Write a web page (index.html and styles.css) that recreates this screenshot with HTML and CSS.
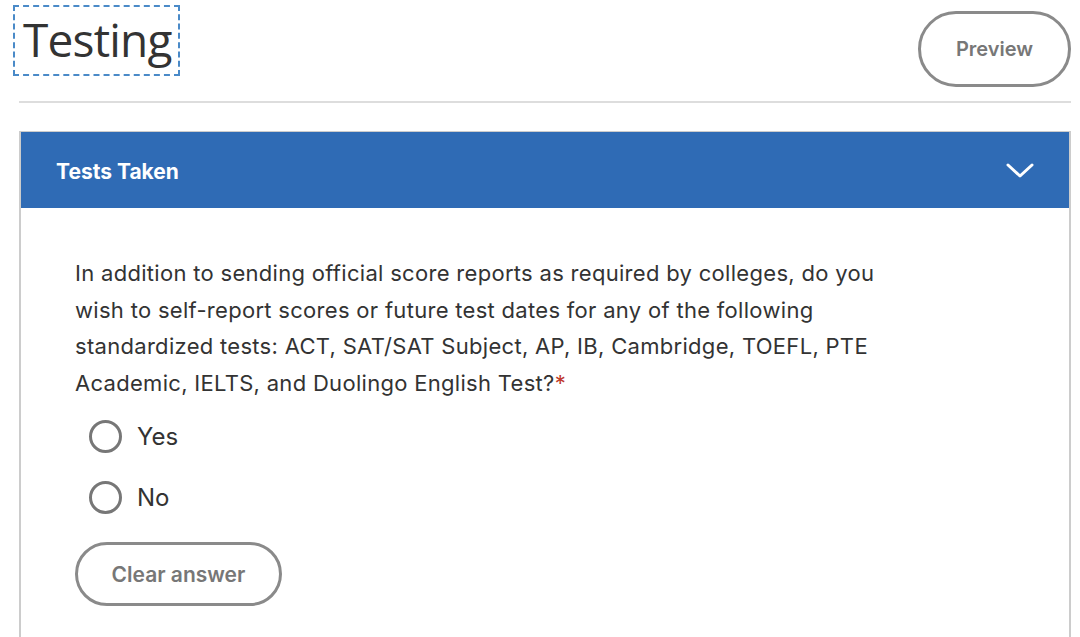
FILE: index.html
```html
<!DOCTYPE html>
<html lang="en">
<head>
  <meta charset="UTF-8">
  <title>Testing</title>
  <link rel="stylesheet" href="styles.css">
</head>
<body>
<div class="page">
  <div class="top-bar">
    <h1 class="page-title">Testing</h1>
    <button class="btn-pill btn-preview">Preview</button>
  </div>
  <hr class="divider">

  <div class="panel">
    <div class="panel-head">
      <span class="panel-title">Tests Taken</span>
      <svg class="chevron" width="30" height="18" viewBox="0 0 30 18">
        <path d="M3 3 L15 14 L27 3" fill="none" stroke="#fff" stroke-width="3" stroke-linecap="round" stroke-linejoin="round"/>
      </svg>
    </div>
    <div class="panel-body">
      <p class="question">In addition to sending official score reports as required by colleges, do you wish to self-report scores or future test dates for any of the following standardized tests: ACT, SAT/SAT Subject, AP, IB, Cambridge, TOEFL, PTE Academic, IELTS, and Duolingo English Test?<span class="req">*</span></p>

      <label class="radio-row"><span class="radio"></span>Yes</label>
      <label class="radio-row"><span class="radio"></span>No</label>

      <button class="btn-pill btn-clear">Clear answer</button>
    </div>
  </div>
</div>
</body>
</html>
```

FILE: styles.css
```css
* { margin: 0; padding: 0; box-sizing: border-box; }
body {
  font-family: 'Inter', 'Noto Sans', sans-serif;
  background: #fff;
  color: #333;
}

.page {
  padding: 5px 9px 0 19px;
}

.top-bar {
  display: flex;
  justify-content: space-between;
  align-items: flex-start;
}

.page-title {
  margin-left: -6px;
  padding: 4px 6px 6px 8px;
  border: 2px dashed #4a8ac8;
  font-family: 'Open Sans', sans-serif;
  font-size: 46px;
  font-weight: 400;
  line-height: 57px;
  color: #333;
  letter-spacing: -0.8px;
}

.btn-pill {
  background: #fff;
  border: 3px solid #8a8a8a;
  border-radius: 40px;
  color: #777;
  font-family: inherit;
  font-weight: 600;
  cursor: pointer;
}

.btn-preview {
  margin-top: 6px;
  width: 153px;
  height: 76px;
  font-size: 20px;
}

.divider {
  border: none;
  border-top: 2px solid #ddd;
  margin-top: 14px;
}

.panel {
  margin-top: 28px;
  border-left: 2px solid #ccc;
  border-right: 2px solid #ccc;
  border-top: 1px solid #ccc;
}

.panel-head {
  background: #2f6bb5;
  height: 76px;
  display: flex;
  align-items: center;
  justify-content: space-between;
  padding: 2px 34px 0 35px;
}

.panel-title {
  color: #fff;
  font-size: 21px;
  font-weight: 700;
}

.chevron { display: block; }

.panel-body {
  padding: 47px 40px 40px 54px;
}

.question {
  max-width: 825px;
  margin-bottom: 5px;
  font-size: 22px;
  letter-spacing: 0.3px;
  line-height: 36.5px;
  color: #333;
}

.req { color: #c0392b; }

.radio-row {
  display: flex;
  align-items: center;
  gap: 15px;
  height: 61px;
  padding-left: 14px;
  font-size: 24px;
  color: #333;
}

.radio {
  width: 33px;
  height: 33px;
  border: 3px solid #777;
  border-radius: 50%;
}

.btn-clear {
  margin-top: 14px;
  width: 207px;
  height: 64px;
  font-size: 21px;
}
```
